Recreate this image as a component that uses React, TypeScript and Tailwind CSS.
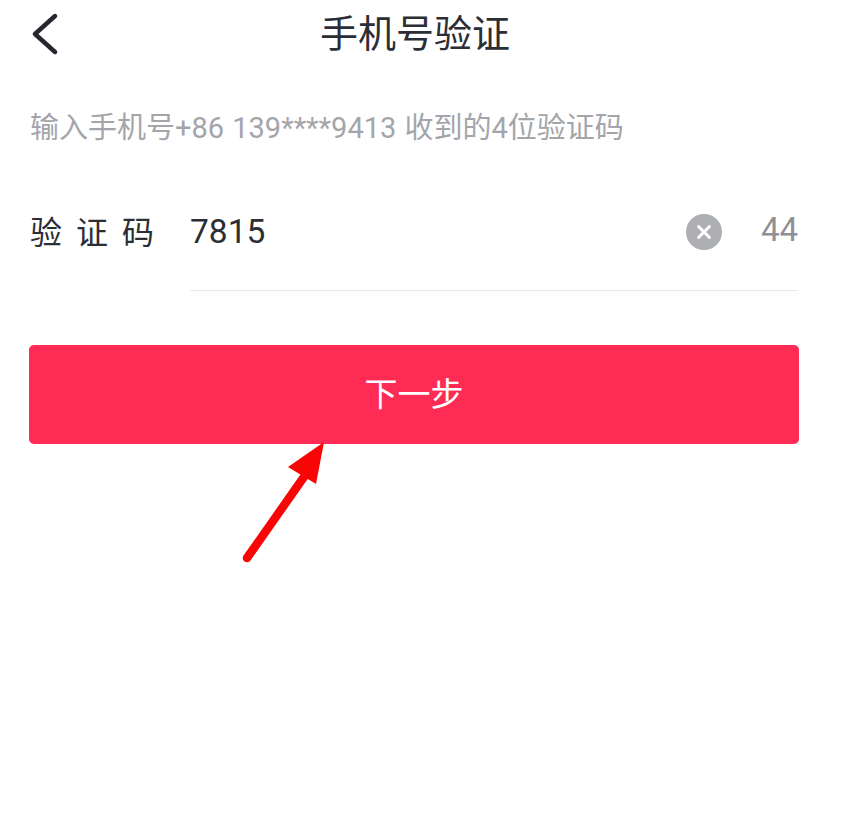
const font = "font-['Roboto','Noto_Sans_CJK_SC',sans-serif]"

export default function App() {
  return (
    <div className={`relative h-[836px] w-[854px] overflow-hidden bg-white ${font}`}>
      {/* header */}
      <div className="relative flex h-[66px] items-center justify-center pr-[24px] pt-[1px]">
        <svg className="absolute left-[32px] top-[13px]" width="26" height="42" viewBox="0 0 26 42" fill="none">
          <path d="M23 3 L3 21 L23 39" stroke="#24272e" strokeWidth="4.4" strokeLinecap="round" strokeLinejoin="round" />
        </svg>
        <span className="text-[38px] leading-none text-[#2c2e35]">手机号验证</span>
      </div>

      <p className="mt-[46px] pl-[30px] text-[29px] leading-[32px] text-[#a3a5aa] [word-spacing:1px]">输入手机号+86 139****9413 收到的4位验证码</p>

      {/* code row */}
      <div className="mt-[39px] flex pl-[30px] pr-[56px]">
        <div className="w-[160px] pt-[34px] text-[32px] leading-[32px] tracking-[14px] text-[#2c2e35]">验证码</div>
        <div className="flex h-[108px] flex-1 items-center border-b border-[#e9e9ec] pb-[10px]">
          <span className="flex-1 text-[33.5px] leading-none text-[#2c2e35]">7815</span>
          <span className="mr-[39px] flex h-[36px] w-[36px] items-center justify-center rounded-full bg-[#aeafb4]">
            <svg width="18" height="18" viewBox="0 0 18 18" fill="none">
              <path d="M3.5 3.5 L14.5 14.5 M14.5 3.5 L3.5 14.5" stroke="#fff" strokeWidth="3" strokeLinecap="round" />
            </svg>
          </span>
          <span className="mb-[4px] w-[37px] text-[33px] leading-none text-[#8e9095]">44</span>
        </div>
      </div>

      {/* next button */}
      <button className="ml-[29px] mt-[54px] flex h-[99px] w-[770px] items-center justify-center rounded-[5px] bg-[#fe2c55] text-[33px] text-white">
        下一步
      </button>

      {/* annotation arrow */}
      <svg className="absolute left-[240px] top-[436px]" width="90" height="128" viewBox="0 0 90 128" fill="none">
        <path d="M7 122 L66 38" stroke="#f80606" strokeWidth="8.5" strokeLinecap="round" />
        <path d="M84 6 L48 31 L76 48 Z" fill="#f80606" />
      </svg>
    </div>
  )
}
